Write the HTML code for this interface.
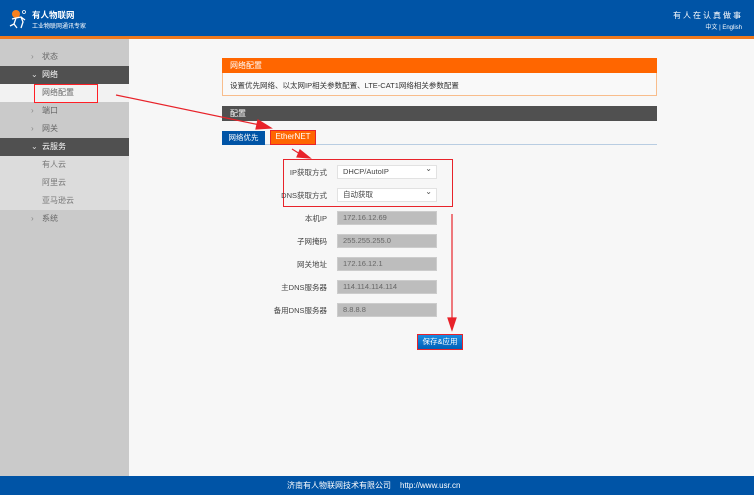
<!DOCTYPE html>
<html><head><meta charset="utf-8"><style>
*{margin:0;padding:0;box-sizing:border-box}
body{width:754px;height:495px;overflow:hidden;background:#f7f7f7;font-family:"Liberation Sans","Noto Sans CJK SC",sans-serif;position:relative;font-size:7px;color:#333}
.abs{position:absolute}
#hdr{left:0;top:0;width:754px;height:36px;background:#0054a6}
#ol{left:0;top:36px;width:754px;height:3px;background:#f07a1e}
#side{left:0;top:39px;width:129px;height:437px;background:#cacaca}
.it{position:absolute;left:0;width:129px;height:18px;line-height:18px;font-size:8px;color:#666}
.it.d{background:#505050;color:#fff}
.it.s{background:#dcdcdc;color:#777;padding-left:42px}
.it.w{background:#f2f2f2;color:#666;padding-left:42px}
.it .a{position:absolute;left:31px;color:#888}
.it.d .a{color:#ddd}
.it .t{position:absolute;left:42px}
#ft{left:0;top:476px;width:754px;height:19px;background:#0054a6;color:#fff;font-size:8px;line-height:19px}
.lbl{position:absolute;width:85px;left:242px;text-align:right;font-size:7.5px;color:#444}
.inp{position:absolute;left:337px;width:100px;height:14px;background:#bdbdbd;border:1px solid #ccc;font-size:7.5px;color:#666;line-height:12px;padding-left:5px}
.sel{position:absolute;left:337px;width:100px;height:14px;background:#fff;border:1px solid #e2e2e2;font-size:7.5px;color:#444;line-height:12px;padding-left:5px}
.sel:after{content:"⌄";position:absolute;right:4px;top:-3px;font-size:8px;color:#555}
</style></head><body>
<div id="hdr" class="abs">
<svg class="abs" style="left:8px;top:8px" width="20" height="22" viewBox="0 0 20 22"><circle cx="8" cy="6" r="4" fill="#f7811f"/><circle cx="16" cy="4" r="1.5" fill="none" stroke="#fff" stroke-width=".8"/><path d="M4 11 L8 10 L13 9 L15 14 L13 20 M8 10 L6 16 L2 18 M6 16 L9 20 M13 9 L17 12" stroke="#fff" stroke-width="1.3" fill="none"/></svg>
<div class="abs" style="left:32px;top:9px;color:#fff;font-size:8.5px;font-weight:bold">有人物联网</div>
<div class="abs" style="left:32px;top:21px;color:#fff;font-size:6px">工业物联网通讯专家</div>
<div class="abs" style="right:11px;top:10px;color:#fff;font-size:8px;letter-spacing:2px">有人在认真做事</div>
<div class="abs" style="right:12px;top:22px;color:#fff;font-size:6px">中文 | English</div>
</div>
<div id="ol" class="abs"></div>
<div id="side" class="abs">
<div class="it" style="top:9px"><span class="a">›</span><span class="t">状态</span></div>
<div class="it d" style="top:27px"><span class="a">⌄</span><span class="t">网络</span></div>
<div class="it w" style="top:45px">网络配置</div>
<div class="it" style="top:63px"><span class="a">›</span><span class="t">端口</span></div>
<div class="it" style="top:81px"><span class="a">›</span><span class="t">网关</span></div>
<div class="it d" style="top:99px"><span class="a">⌄</span><span class="t">云服务</span></div>
<div class="it s" style="top:117px">有人云</div>
<div class="it s" style="top:135px">阿里云</div>
<div class="it s" style="top:153px">亚马逊云</div>
<div class="it" style="top:171px"><span class="a">›</span><span class="t">系统</span></div>
</div>
<div class="abs" style="left:34px;top:84px;width:64px;height:19px;border:1.5px solid #ff1f26"></div>
<div class="abs" style="left:222px;top:58px;width:435px;height:38px;border:1px solid #f8bd8c;background:#f9f9f9"></div>
<div class="abs" style="left:222px;top:58px;width:435px;height:15px;background:#ff6600;color:#fff;font-size:8px;line-height:15px;padding-left:8px">网络配置</div>
<div class="abs" style="left:230px;top:80px;font-size:7.5px;color:#333">设置优先网络、以太网IP相关参数配置、LTE-CAT1网络相关参数配置</div>
<div class="abs" style="left:222px;top:106px;width:435px;height:15px;background:#505050;color:#fff;font-size:8px;line-height:15px;padding-left:8px">配置</div>
<div class="abs" style="left:222px;top:144px;width:435px;height:1px;background:#b9cde2"></div>
<div class="abs" style="left:222px;top:131px;width:43px;height:14px;background:#0054a6;color:#fff;font-size:7.5px;line-height:14px;text-align:center">网络优先</div>
<div class="abs" style="left:270px;top:130px;width:46px;height:15px;background:#ff6600;border:1.5px solid #e8232a;color:#fff;font-size:8px;line-height:12px;text-align:center">EtherNET</div>
<div class="abs" style="left:283px;top:159px;width:170px;height:48px;border:1.5px solid #e8232a"></div>
<div class="lbl" style="top:167px">IP获取方式</div><div class="sel" style="top:165px">DHCP/AutoIP</div>
<div class="lbl" style="top:190px">DNS获取方式</div><div class="sel" style="top:188px">自动获取</div>
<div class="lbl" style="top:213px">本机IP</div><div class="inp" style="top:211px">172.16.12.69</div>
<div class="lbl" style="top:236px">子网掩码</div><div class="inp" style="top:234px">255.255.255.0</div>
<div class="lbl" style="top:259px">网关地址</div><div class="inp" style="top:257px">172.16.12.1</div>
<div class="lbl" style="top:282px">主DNS服务器</div><div class="inp" style="top:280px">114.114.114.114</div>
<div class="lbl" style="top:305px">备用DNS服务器</div><div class="inp" style="top:303px">8.8.8.8</div>
<div class="abs" style="left:417px;top:334px;width:46px;height:16px;background:linear-gradient(#1a8ae0,#0060b8);border:1.5px solid #e8232a;color:#fff;font-size:7.5px;line-height:13px;text-align:center">保存&amp;应用</div>
<svg class="abs" style="left:0;top:0" width="754" height="495"><g stroke="#e8232a" fill="#e8232a" stroke-width="1.2">
<line x1="116" y1="95" x2="260" y2="125"/><polygon points="271,128 258,120 256,129"/>
<line x1="292" y1="149" x2="300" y2="154"/><polygon points="310,158 300,150 297,157"/>
<line x1="452" y1="214" x2="452" y2="320"/><polygon points="452,330 448,318 456,318"/>
</g></svg>
<div id="ft" class="abs"><span class="abs" style="left:287px">济南有人物联网技术有限公司</span><span class="abs" style="left:400px">http://www.usr.cn</span></div>
</body></html>
